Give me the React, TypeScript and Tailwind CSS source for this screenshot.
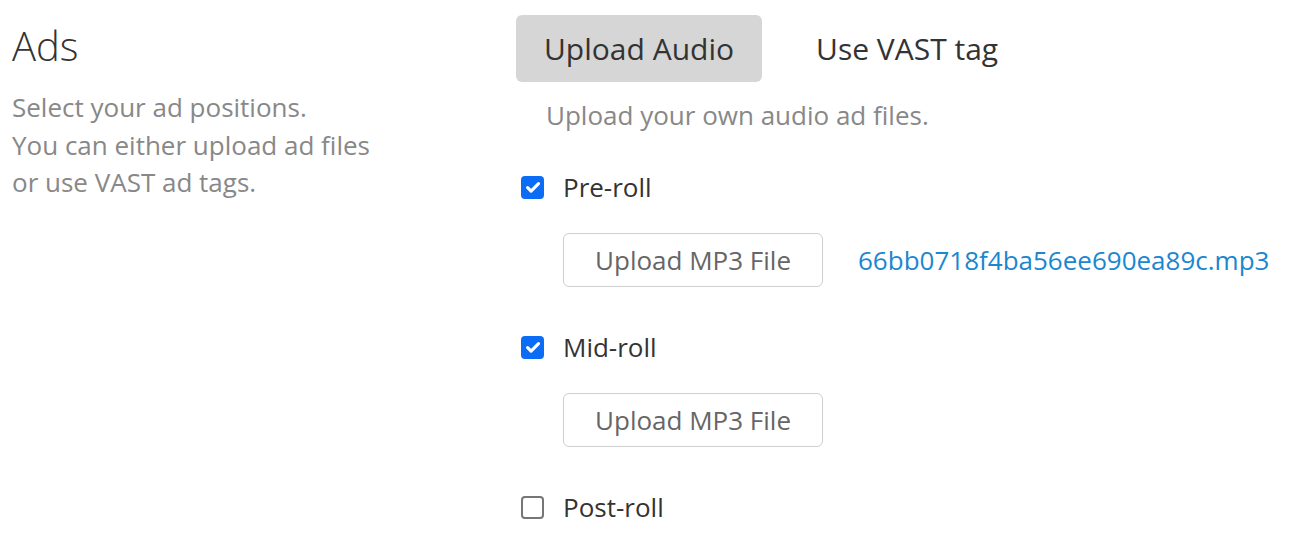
import { useState } from 'react';

type Slot = { key: string; label: string; checked: boolean; file?: string };

const initialSlots: Slot[] = [
  { key: 'pre', label: 'Pre-roll', checked: true, file: '66bb0718f4ba56ee690ea89c.mp3' },
  { key: 'mid', label: 'Mid-roll', checked: true },
  { key: 'post', label: 'Post-roll', checked: false },
];

function Checkbox({ checked, onChange }: { checked: boolean; onChange: () => void }) {
  return (
    <button
      onClick={onChange}
      className={
        checked
          ? 'w-[23px] h-[23px] rounded-[4px] bg-[#0b6cf6] flex items-center justify-center'
          : 'w-[23px] h-[23px] rounded-[4px] border-2 border-[#767676] bg-white'
      }
    >
      {checked && (
        <svg viewBox="0 0 16 16" className="w-[18px] h-[18px]">
          <path d="M3.2 8.6l3.1 3.1L12.9 5" fill="none" stroke="white" strokeWidth="2.8" strokeLinecap="round" strokeLinejoin="round" />
        </svg>
      )}
    </button>
  );
}

export default function App() {
  const [tab, setTab] = useState<'upload' | 'vast'>('upload');
  const [slots, setSlots] = useState(initialSlots);

  const toggle = (key: string) => {
    setSlots(slots.map(s => (s.key === key ? { ...s, checked: !s.checked } : s)));
  };

  return (
    <div className="w-[1303px] h-[556px] bg-white flex font-['Open_Sans',sans-serif]">
      <div className="w-[516px] pl-3 pt-[20px]">
        <h2 className="text-[40px] leading-[52px] font-light text-[#333]">Ads</h2>
        <p className="mt-[17px] text-[26px] leading-[37.5px] text-[#888]">
          Select your ad positions.
          <br />
          You can either upload ad files
          <br />
          or use VAST ad tags.
        </p>
      </div>

      <div className="pt-[15px]">
        <div className="flex items-center">
          <button
            onClick={() => setTab('upload')}
            className={`h-[67px] px-[28px] rounded-[6px] text-[30px] text-[#333] ${tab === 'upload' ? 'bg-[#d6d6d6]' : ''}`}
          >
            Upload Audio
          </button>
          <button
            onClick={() => setTab('vast')}
            className={`h-[67px] px-[28px] ml-[26px] rounded-[6px] text-[30px] text-[#333] ${tab === 'vast' ? 'bg-[#d6d6d6]' : ''}`}
          >
            Use VAST tag
          </button>
        </div>

        <p className="mt-[15px] pl-[30px] text-[26px] leading-[36px] text-[#888]">Upload your own audio ad files.</p>

        <div className="mt-[36px] flex flex-col">
          {slots.map((slot, i) => (
            <div key={slot.key} className={i > 0 ? 'mt-[42px]' : ''}>
              <label className="flex items-center h-[36px] pl-[5px]">
                <Checkbox checked={slot.checked} onChange={() => toggle(slot.key)} />
                <span className="ml-[19px] text-[26px] text-[#333]">{slot.label}</span>
              </label>
              {slot.checked && (
                <div className="mt-[28px] pl-[47px] flex items-center">
                  <button className="h-[54px] w-[260px] border border-[#cfcfcf] rounded-[6px] text-[26px] text-[#666] bg-white">
                    Upload MP3 File
                  </button>
                  {slot.file && (
                    <a className="ml-[35px] text-[26px] text-[#1a87d0]">{slot.file}</a>
                  )}
                </div>
              )}
            </div>
          ))}
        </div>
      </div>
    </div>
  );
}
